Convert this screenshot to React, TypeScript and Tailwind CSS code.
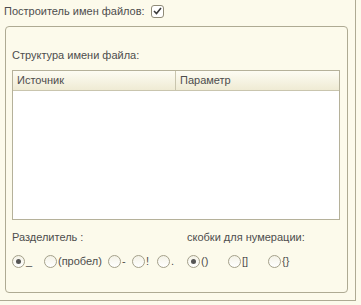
import React from "react";

function Radio({ checked, label, className = "" }: { checked?: boolean; label: string; className?: string }) {
    return (
        <div className={`flex items-center shrink-0 ${className}`}>
            <span className="w-[13px] h-[13px] rounded-full border border-[#a4a08a] bg-gradient-to-b from-[#f4f2e6] to-white flex items-center justify-center shrink-0">
                {checked && <span className="w-[5px] h-[5px] rounded-full bg-[#555]" />}
            </span>
            <span className="ml-[1px] leading-none">{label}</span>
        </div>
    );
}

export default function App() {
    return (
        <div
            className="w-[361px] h-[305px] bg-[#fcfaeb] text-[#4d4d4d] text-[11px]"
            style={{ fontFamily: '"Liberation Sans", Arial, sans-serif' }}
        >
            <div className="w-[356px] h-[301px] border-r border-b border-[#aeaa93] pl-[4px] flex flex-col">
                {/* Header row */}
                <div className="h-[26px] flex items-center pb-[4px]">
                    <span>Построитель имен файлов:</span>
                    <span className="ml-[6px] w-[13px] h-[13px] rounded-[3px] border border-[#8f8b78] bg-white flex items-center justify-center">
                        <svg width="9" height="8" viewBox="0 0 9 8">
                            <path d="M1 4 L3.5 6.5 L8 1" fill="none" stroke="#3a3a3a" strokeWidth="1.6" />
                        </svg>
                    </span>
                </div>

                {/* Group box */}
                <div className="ml-[1px] w-[343px] h-[267px] rounded-[4px] border border-[#aeaa93] bg-[#fcfaeb] pl-[6px] flex flex-col">
                    <div className="mt-[21px] h-[14px] leading-[14px]">Структура имени файла:</div>

                    <div className="mt-[8px] w-[328px] h-[150px] border border-[#b5b19a] bg-white flex flex-col">
                        <div className="h-[20px] flex bg-gradient-to-b from-[#fdfcf3] to-[#efebd4] border-b border-[#c9c5ae]">
                            <div className="w-[163px] border-r border-[#c9c5ae] pl-[4px] flex items-center">Источник</div>
                            <div className="flex-1 pl-[4px] flex items-center">Параметр</div>
                        </div>
                    </div>

                    <div className="mt-[10px] flex h-[14px] leading-[14px]">
                        <div className="w-[175px]">Разделитель :</div>
                        <div>скобки для нумерации:</div>
                    </div>

                    <div className="mt-[10px] flex h-[14px]">
                        <div className="w-[175px] flex items-center">
                            <Radio checked label="_" className="w-[32px]" />
                            <Radio label="(пробел)" className="w-[64px]" />
                            <Radio label="-" className="w-[24px]" />
                            <Radio label="!" className="w-[25px]" />
                            <Radio label="." />
                        </div>
                        <div className="flex items-center">
                            <Radio checked label="()" className="w-[41px]" />
                            <Radio label="[]" className="w-[40px]" />
                            <Radio label="{}" />
                        </div>
                    </div>
                </div>
            </div>
        </div>
    );
}
